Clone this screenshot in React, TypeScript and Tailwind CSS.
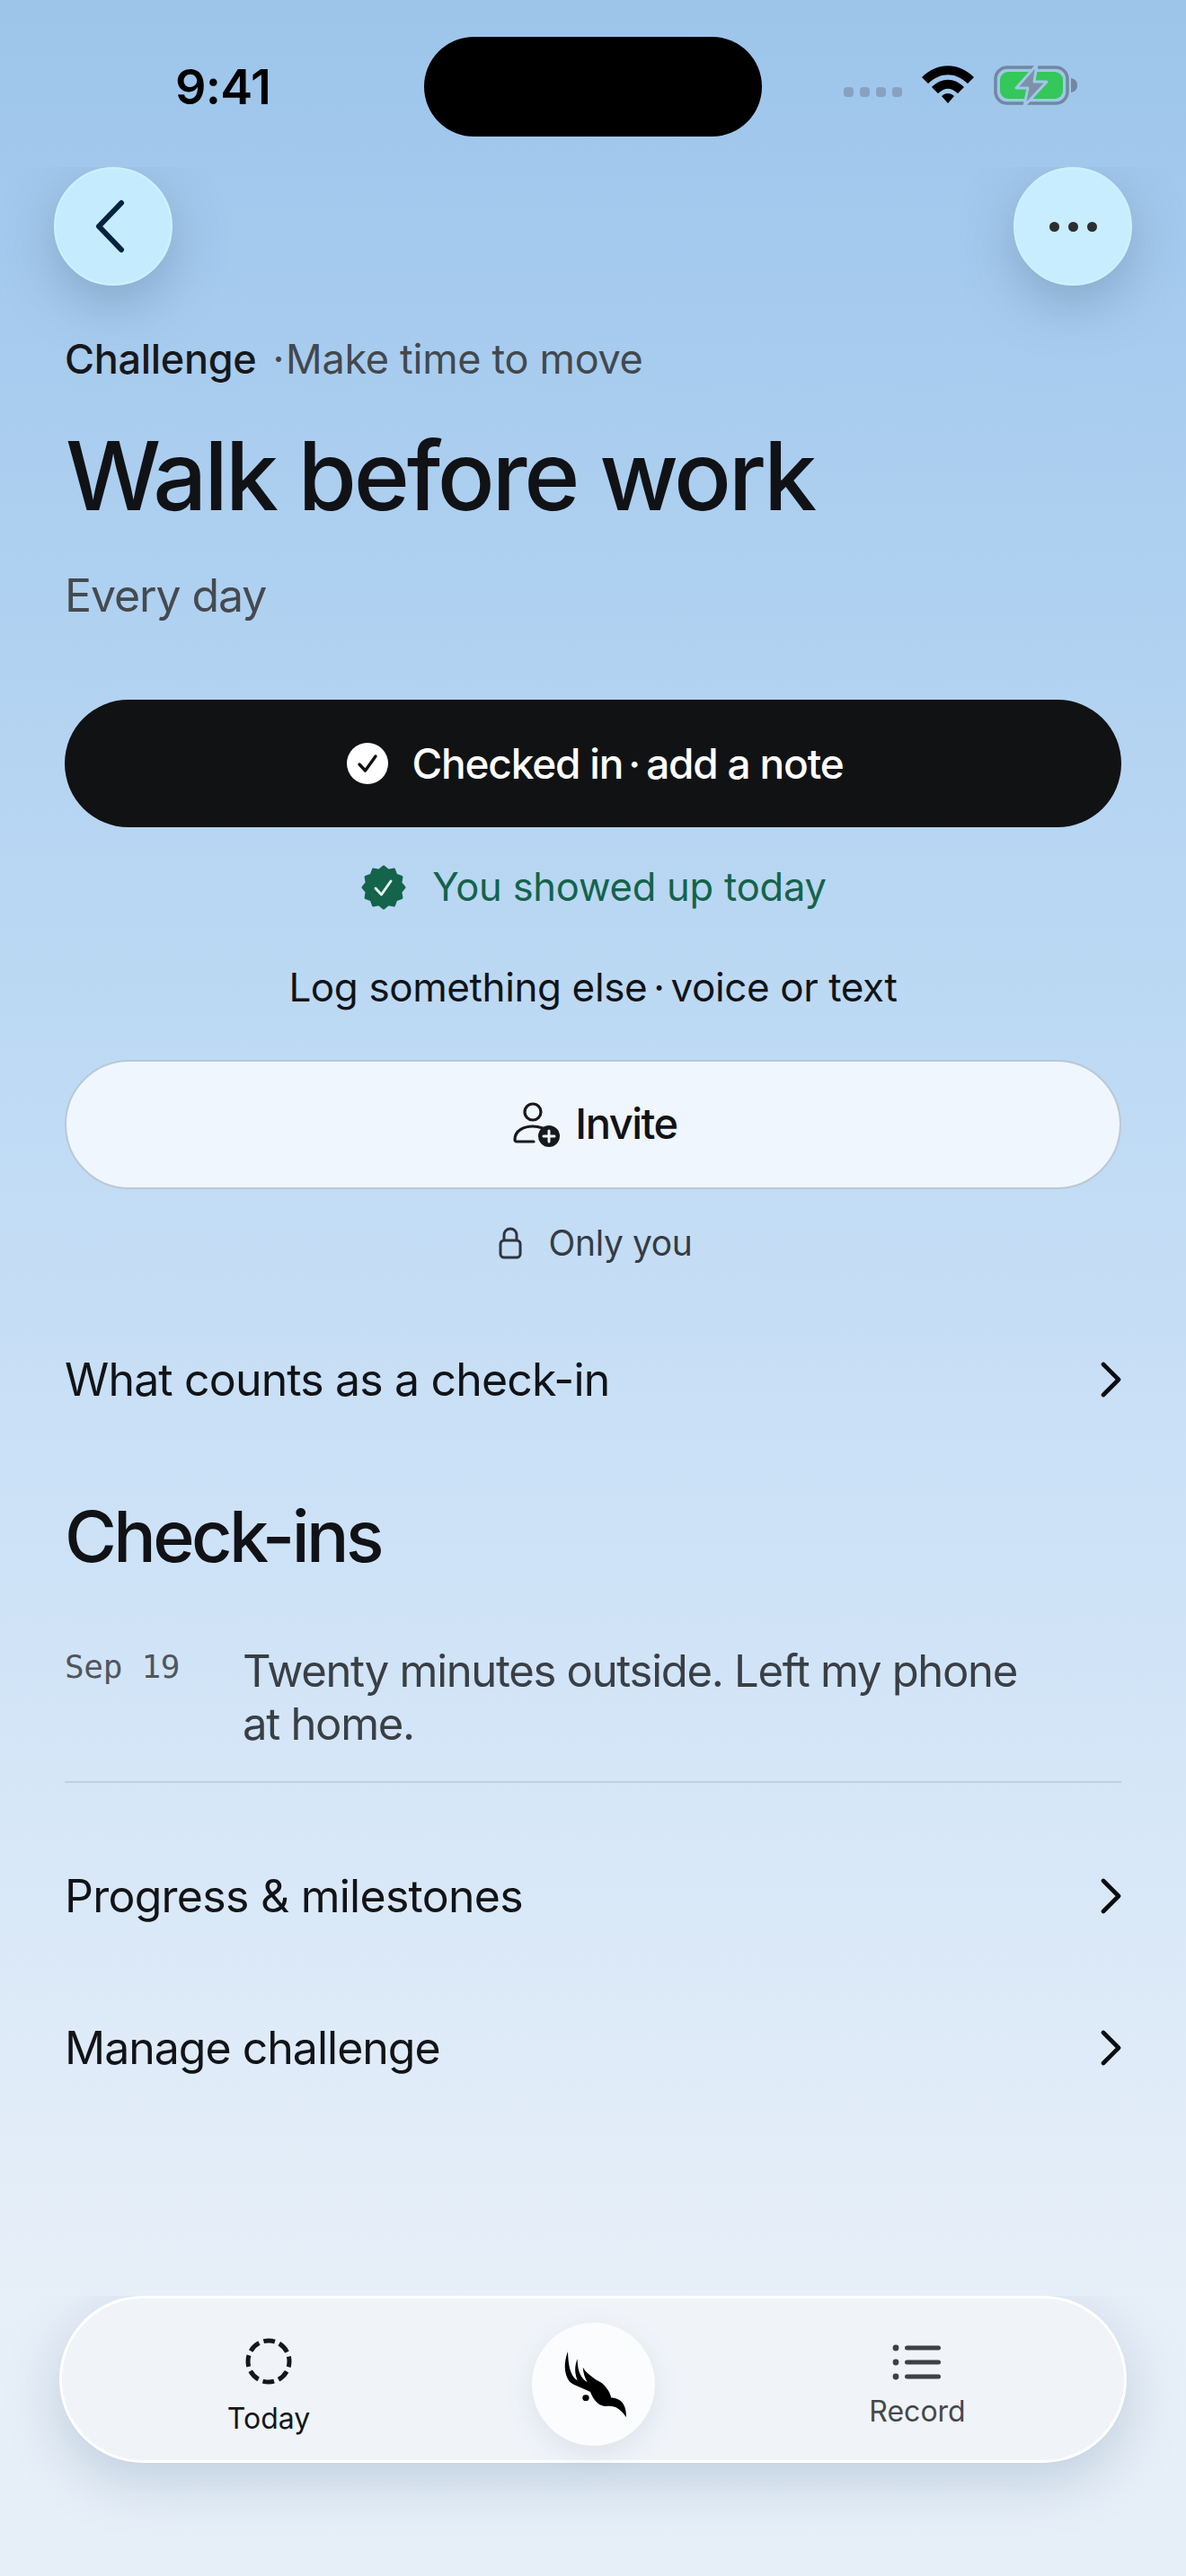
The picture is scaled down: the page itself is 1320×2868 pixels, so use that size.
const sealPoints = Array.from({ length: 24 }, (_, i) => {
  const r = i % 2 === 0 ? 23 : 19.5;
  const a = (i * Math.PI) / 12 - Math.PI / 2;
  return `${(25 + r * Math.cos(a)).toFixed(2)},${(25 + r * Math.sin(a)).toFixed(2)}`;
}).join(" ");

function Chevron() {
  return (
    <svg width="24" height="40" viewBox="0 0 24 40" fill="none" stroke="#0b0d10" strokeWidth="4.6" strokeLinecap="round" strokeLinejoin="round">
      <path d="M4 3 L21 20 L4 37" />
    </svg>
  );
}

function Row({ label, tracking }: { label: string; tracking: string }) {
  return (
    <div className="flex h-[80px] items-center justify-between">
      <span className={`text-[50px] leading-[64px] text-[#111317] ${tracking}`}>{label}</span>
      <Chevron />
    </div>
  );
}

function StatusBar() {
  return (
    <div className="flex h-[186px] items-start">
      <div className="w-[472px] pl-[195px]">
        <span className="mt-[66px] block text-[54px] font-semibold leading-[62px] tracking-[-0.7px] text-black">9:41</span>
      </div>
      <div className="mt-[41px] h-[111px] w-[376px] rounded-[56px] bg-black" />
      <div className="mt-[72px] flex flex-1 items-center justify-end pr-[120px]">
        <div className="mt-[14px] mr-[22px] flex gap-[7px]">
          <span className="h-[11px] w-[11px] rounded-[4px] bg-[#86a2bf]" />
          <span className="h-[11px] w-[11px] rounded-[4px] bg-[#86a2bf]" />
          <span className="h-[11px] w-[11px] rounded-[4px] bg-[#86a2bf]" />
          <span className="h-[11px] w-[11px] rounded-[4px] bg-[#86a2bf]" />
        </div>
        <svg width="58" height="44" viewBox="0 0 58 44" className="mr-[22px]">
          <path d="M0 13 C17 -4 41 -4 58 13 L51 20 C37 7 21 7 7 20 Z" fill="#000" />
          <path d="M11 24 C22 13 36 13 47 24 L40 31 C32 24 26 24 18 31 Z" fill="#000" />
          <path d="M22 34 C26 30 32 30 36 34 L29 42 Z" fill="#000" />
        </svg>
        <svg width="94" height="46" viewBox="0 0 94 46">
          <rect x="2" y="3" width="80" height="40" rx="13" fill="none" stroke="#71889f" strokeWidth="3.5" />
          <rect x="7" y="8" width="70" height="30" rx="9" fill="#34c759" />
          <path d="M86 15 C91 16 93 19 93 23 C93 27 91 30 86 31 Z" fill="#71889f" />
          <path d="M48 0 L25 26 L38 26 L34 46 L59 19 L45 19 Z" fill="#7d92a8" stroke="#a1c7eb" strokeWidth="3" strokeLinejoin="round" />
        </svg>
      </div>
    </div>
  );
}

export default function App() {
  return (
    <div className="flex h-[2868px] w-[1320px] flex-col overflow-hidden bg-[linear-gradient(180deg,#9dc5ea_0%,#a6cbee_12%,#b9d7f3_35%,#cfe3f7_62%,#dfebf8_80%,#e7eff8_89%,#e6eff8_100%)] font-['Inter',sans-serif]">
      <StatusBar />

      <div className="mb-[-56px] flex h-[240px] items-start justify-between overflow-hidden px-[60px]">
        <button className="flex h-[132px] w-[132px] items-center justify-center rounded-full border-2 border-[#cdf1fe] bg-[#c5ecfe] shadow-[0_20px_60px_rgba(70,100,130,0.34)]">
          <svg width="40" height="62" viewBox="0 0 40 62" fill="none" stroke="#04233f" strokeWidth="6" strokeLinecap="round" strokeLinejoin="round" className="mr-[8px]">
            <path d="M33 5 L8 31 L33 57" />
          </svg>
        </button>
        <button className="flex h-[132px] w-[132px] items-center justify-center gap-[10px] rounded-full border-2 border-[#cdf1fe] bg-[#c8edfe] shadow-[0_20px_60px_rgba(70,100,130,0.34)]">
          <span className="h-[11px] w-[11px] rounded-full bg-[#2c2e30]" />
          <span className="h-[11px] w-[11px] rounded-full bg-[#2c2e30]" />
          <span className="h-[11px] w-[11px] rounded-full bg-[#2c2e30]" />
        </button>
      </div>

      <div className="flex flex-col px-[72px]">
        <div className="flex h-[60px] items-center text-[45px] tracking-[-0.3px]">
          <span className="font-[450] text-[#16181c]">Challenge</span>
          <span className="ml-[18px] text-[#43484e]">·</span>
          <span className="ml-[2px] text-[#43484e]">Make time to move</span>
        </div>
        <h1 className="mt-[40px] ml-px h-[120px] text-[106px] font-medium leading-[120px] tracking-[-3.3px] text-[#101216]">Walk before work</h1>
        <p className="mt-[43px] h-[60px] text-[50px] leading-[60px] tracking-[-1.1px] text-[#454a50]">Every day</p>

        <button className="mt-[86px] flex h-[142px] items-center justify-center rounded-[71px] bg-[#111214] pl-[4px] text-white">
          <svg width="46" height="46" viewBox="0 0 46 46" className="mr-[27px]">
            <circle cx="23" cy="23" r="23" fill="#fff" />
            <path d="M14 24 L20.5 31 L32 15" fill="none" stroke="#111214" strokeWidth="3.4" strokeLinecap="round" strokeLinejoin="round" />
          </svg>
          <span className="text-[46px] font-[450] tracking-[-1.2px]">Checked in</span>
          <span className="mx-[6px] text-[46px] font-medium">·</span>
          <span className="text-[46px] font-[450] tracking-[-1.2px]">add a note</span>
        </button>

        <div className="mt-[37px] flex h-[60px] items-center justify-center pl-[2px]">
          <svg width="50" height="50" viewBox="0 0 50 50" className="mr-[29px]">
            <polygon points={sealPoints} fill="#14634b" stroke="#14634b" strokeWidth="3" strokeLinejoin="round" />
            <path d="M16 26 L22.5 33 L33 18" fill="none" stroke="#e3f1ec" strokeWidth="3" strokeLinecap="round" strokeLinejoin="round" />
          </svg>
          <span className="text-[43.5px] tracking-[-0.22px] text-[#14634b]">You showed up today</span>
        </div>

        <div className="mt-[51px] flex h-[60px] items-center justify-center text-[44px] tracking-[-0.4px] text-[#111317]">
          <span>Log something else</span>
          <span className="mx-[7px]">·</span>
          <span>voice or text</span>
        </div>

        <button className="mt-[51px] flex h-[144px] items-center justify-center rounded-[72px] border-2 border-[#b9c8d6] bg-[#f0f6fd] pl-[4px] text-[#111317]">
          <svg width="54" height="52" viewBox="0 0 54 52" fill="none" className="mr-[16px]">
            <circle cx="23" cy="12" r="9" stroke="#17191d" strokeWidth="3.2" />
            <path d="M3 43 C3 32 14 28 23 28 C27 28 31 29 34 30 M3 43 C3 44 4 45 5 45 L24 45" stroke="#17191d" strokeWidth="3.2" strokeLinecap="round" />
            <circle cx="41" cy="39" r="12" fill="#17191d" />
            <path d="M41 33 V45 M35 39 H47" stroke="#f0f6fd" strokeWidth="3" strokeLinecap="round" />
          </svg>
          <span className="mb-[3px] text-[47px] font-[450] leading-[56px] tracking-[-1.5px]">Invite</span>
        </button>

        <div className="mt-[30px] flex h-[60px] items-center justify-center pl-[5px]">
          <svg width="26" height="36" viewBox="0 0 26 36" fill="none" stroke="#2e3540" strokeWidth="3" className="mr-[30px]">
            <rect x="2" y="15" width="22" height="19" rx="4" />
            <path d="M6 15 V9 C6 5 9 2 13 2 C17 2 20 5 20 9 V15" />
          </svg>
          <span className="text-[39px] tracking-[-0.4px] text-[#353b45]">Only you</span>
        </div>

        <div className="mt-[82px]">
          <Row label="What counts as a check-in" tracking="tracking-[-0.85px]" />
        </div>

        <h2 className="mt-[86px] h-[96px] text-[79px] font-medium leading-[96px] tracking-[-3.6px] text-[#101216]">Check-ins</h2>

        <div className="mt-[73px] flex border-b-2 border-[#bed1e3] pb-[34px]">
          <span className="w-[198px] shrink-0 whitespace-pre font-['DejaVu_Sans_Mono',monospace] text-[36px] leading-[50px] tracking-[-0.3px] text-[#50565e]">Sep 19</span>
          <p className="w-[900px] text-[49px] leading-[59px] tracking-[-1.3px] text-[#3a3f45]">Twenty minutes outside. Left my phone at home.</p>
        </div>

        <div className="mt-[86px]">
          <Row label="Progress & milestones" tracking="tracking-[-0.74px]" />
        </div>
        <div className="mt-[89px]">
          <Row label="Manage challenge" tracking="tracking-[-1px]" />
        </div>
      </div>

      <div className="mt-auto flex h-[312px] items-start overflow-hidden px-[66px]">
        <nav className="relative flex h-[186px] w-full items-center justify-between rounded-[93px] border-[3px] border-white bg-[#f0f4f9] shadow-[0_20px_60px_rgba(80,115,145,0.26)]">
          <div className="mt-[18px] flex w-[460px] flex-col items-center">
            <svg width="52" height="52" viewBox="0 0 52 52" fill="none" className="mb-[18px]">
              <circle cx="26" cy="26" r="23" stroke="#15171a" strokeWidth="5" strokeDasharray="12.8 5.26" strokeDashoffset="6.4" />
            </svg>
            <span className="text-[32px] leading-[40px] text-[#15171a]">Today</span>
          </div>
          <div className="mt-[10px] flex h-[137px] w-[137px] items-center justify-center rounded-full bg-[#fbfcfe] shadow-[0_10px_30px_rgba(90,110,130,0.12)]">
            <svg width="76" height="82" viewBox="0 0 228 246">
              <path d="M30 15 C15 55 18 90 35 115 C50 130 75 135 105 150 C115 175 130 198 160 198 C185 195 205 205 225 235 C225 200 215 180 190 172 C180 170 178 168 175 170 C170 145 150 120 125 110 C105 95 90 85 80 68 C82 85 85 100 95 118 C75 105 62 85 62 40 C52 65 52 85 62 112 C45 100 32 80 30 15 Z" fill="#000" />
              <ellipse cx="90" cy="170" rx="11" ry="10" fill="#000" />
            </svg>
          </div>
          <div className="mt-[15px] flex w-[460px] flex-col items-center">
            <svg width="56" height="42" viewBox="0 0 56 42" className="mb-[14px]">
              <circle cx="4" cy="5" r="3.4" fill="#3e4144" />
              <circle cx="4" cy="21" r="3.4" fill="#3e4144" />
              <circle cx="4" cy="37" r="3.4" fill="#3e4144" />
              <rect x="14" y="2.5" width="40" height="5" rx="2.5" fill="#3e4144" />
              <rect x="14" y="18.5" width="40" height="5" rx="2.5" fill="#3e4144" />
              <rect x="14" y="34.5" width="40" height="5" rx="2.5" fill="#3e4144" />
            </svg>
            <span className="text-[32px] leading-[40px] text-[#45484c]">Record</span>
          </div>
        </nav>
      </div>
    </div>
  );
}
